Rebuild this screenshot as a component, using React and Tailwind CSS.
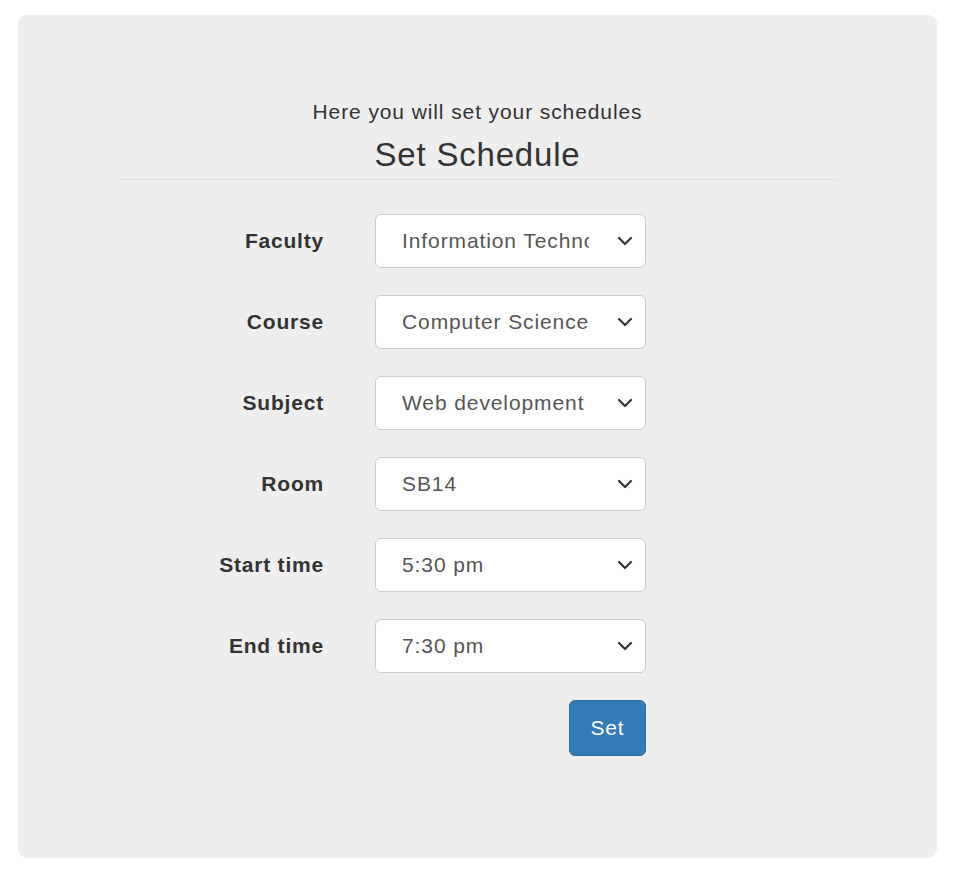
import React from "react";

const rows = [
  ["Faculty", "Information Technology"],
  ["Course", "Computer Science"],
  ["Subject", "Web development"],
  ["Room", "SB14"],
  ["Start time", "5:30 pm"],
  ["End time", "7:30 pm"],
];

function Chevron() {
  return (
    <svg width="16" height="10" viewBox="0 0 16 10" className="shrink-0">
      <path d="M2 2 L8 8 L14 2" fill="none" stroke="#333" strokeWidth="2.2" strokeLinecap="round" strokeLinejoin="round" />
    </svg>
  );
}

export default function App() {
  return (
    <div className="w-[964px] h-[895px] bg-white pt-[15px] pl-[18px]" style={{ fontFamily: '"Liberation Sans", Arial, sans-serif' }}>
      <div className="w-[919px] h-[843px] bg-[#eeeeee] rounded-[9px] flex flex-col items-center pt-[84px]">
        <p className="text-[21px] leading-[26px] tracking-[0.9px] text-[#333]">Here you will set your schedules</p>
        <h3 className="text-[33px] leading-[40px] tracking-[0.8px] text-[#333] mt-[10px]">Set Schedule</h3>
        <div className="w-[719px] h-px bg-[#e2e2e2] mt-[4px]"></div>
        <div className="self-start ml-[157px] flex flex-col gap-[27px] mt-[34px]">
          {rows.map(([label, value]) => (
            <div key={label} className="flex items-center">
              <div className="w-[149px] mr-[51px] text-right font-bold text-[21px] tracking-[0.8px] text-[#333] whitespace-nowrap">{label}</div>
              <div className="w-[271px] h-[54px] bg-white border border-[#cccccc] rounded-[6px] flex items-center pl-[26px] pr-[11px]">
                <div className="w-[187px] overflow-hidden whitespace-nowrap text-[21px] tracking-[0.9px] text-[#555]">{value}</div>
                <div className="flex-1 flex justify-end pr-[1px]"><Chevron /></div>
              </div>
            </div>
          ))}
          <div className="flex justify-end">
            <button className="w-[77px] h-[56px] bg-[#337ab7] border border-[#2e6da4] rounded-[6px] text-white text-[21px] tracking-[0.9px]">Set</button>
          </div>
        </div>
      </div>
    </div>
  );
}
